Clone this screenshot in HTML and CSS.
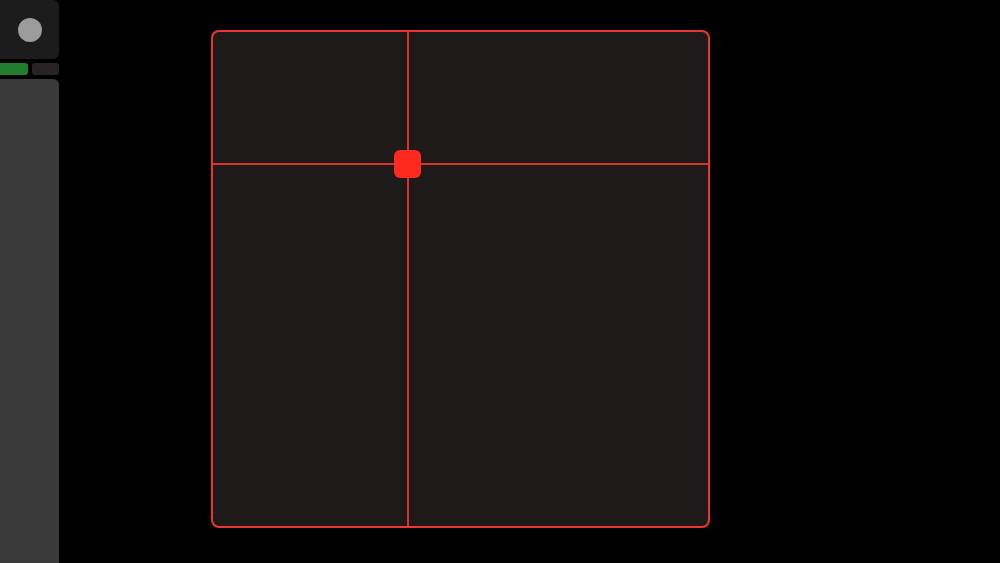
FILE: index.html
```html
<!DOCTYPE html>
<html>
<head>
<meta charset="utf-8">
<link rel="stylesheet" href="styles.css">
</head>
<body>
<div class="app">
  <aside class="sidebar">
    <div class="knob-card"><div class="knob"></div></div>
    <div class="bars">
      <div class="bar bar-on"></div>
      <div class="bar bar-off"></div>
    </div>
    <div class="panel"></div>
  </aside>
  <main class="stage">
    <div class="pad">
      <div class="line-v"></div>
      <div class="line-h"></div>
      <div class="handle"></div>
    </div>
  </main>
</div>
</body>
</html>
```
FILE: styles.css
```css
html, body {
  margin: 0;
  padding: 0;
  background: #000;
  width: 1000px;
  height: 563px;
  overflow: hidden;
  font-family: "Liberation Sans", Arial, sans-serif;
}
.app {
  display: flex;
  height: 563px;
}
.sidebar {
  width: 59px;
  display: flex;
  flex-direction: column;
  gap: 4px;
}
.knob-card {
  height: 59px;
  background: #1c1c1c;
  border-radius: 0 6px 6px 0;
  display: flex;
  align-items: center;
  justify-content: center;
  flex-shrink: 0;
}
.knob {
  width: 24px;
  height: 24px;
  border-radius: 50%;
  background: #9b9b9b;
}
.bars {
  display: flex;
  gap: 4px;
  height: 12px;
  flex-shrink: 0;
}
.bar {
  flex: 1;
  border-radius: 0 3px 3px 0;
}
.bar-on { background: #1f7f2e; }
.bar-off { background: #2a2323; border-radius: 3px; }
.panel {
  flex: 1;
  background: #3a3a3a;
  border-radius: 0 6px 0 0;
}
.stage {
  flex: 1;
  padding: 30px 0 0 152px;
}
.pad {
  position: relative;
  width: 495px;
  height: 494px;
  border: 2.5px solid #ec3530;
  border-radius: 8px;
  background: #1e1a1a;
}
.line-v {
  position: absolute;
  left: 194px;
  top: 0;
  bottom: 0;
  width: 1.5px;
  background: #dc312b;
}
.line-h {
  position: absolute;
  top: 131px;
  left: 0;
  right: 0;
  height: 1.5px;
  background: #dc312b;
}
.handle {
  position: absolute;
  left: 181px;
  top: 118px;
  width: 27px;
  height: 28px;
  border-radius: 6px;
  background: #ff2a1e;
}
```
